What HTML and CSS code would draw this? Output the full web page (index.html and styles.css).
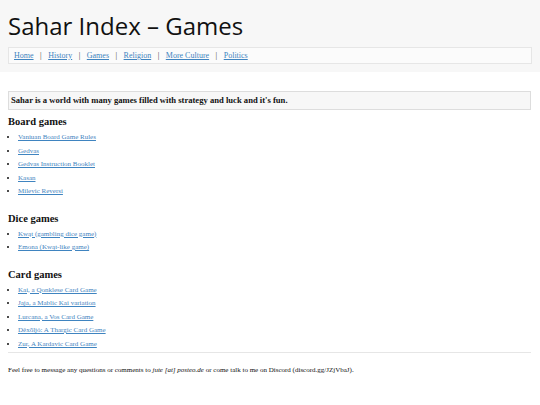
FILE: index.html
```html
<!DOCTYPE html>
<html>
<head>
<meta charset="utf-8">
<title>Sahar Index – Games</title>
<link rel="stylesheet" href="styles.css">
</head>
<body>
<header class="site-header">
  <h1 class="site-title">Sahar Index – Games</h1>
  <nav class="nav">
    <a href="#">Home</a><span class="sep">|</span><a href="#">History</a><span class="sep">|</span><a href="#">Games</a><span class="sep">|</span><a href="#">Religion</a><span class="sep">|</span><a href="#">More Culture</a><span class="sep">|</span><a href="#">Politics</a>
  </nav>
</header>
<main class="content">
  <div class="intro">Sahar is a world with many games filled with strategy and luck and it's fun.</div>
  <h2 class="section">Board games</h2>
  <ul class="games">
    <li><a href="#">Vaniuan Board Game Rules</a></li>
    <li><a href="#">Gedvas</a></li>
    <li><a href="#">Gedvas Instruction Booklet</a></li>
    <li><a href="#">Kasan</a></li>
    <li><a href="#">Milevic Reversi</a></li>
  </ul>
  <h2 class="section">Dice games</h2>
  <ul class="games">
    <li><a href="#">Kwąt (gambling dice game)</a></li>
    <li><a href="#">Emona (Kwąt-like game)</a></li>
  </ul>
  <h2 class="section">Card games</h2>
  <ul class="games last">
    <li><a href="#">Kai, a Qonklese Card Game</a></li>
    <li><a href="#">Jaja, a Mablic Kai variation</a></li>
    <li><a href="#">Lurcana, a Vos Card Game</a></li>
    <li><a href="#">Děxōljó: A Thargic Card Game</a></li>
    <li><a href="#">Zur, A Kardavic Card Game</a></li>
  </ul>
  <hr class="rule">
  <p class="footer">Feel free to message any questions or comments to <em>jute [at] posteo.de</em> or come talk to me on Discord (discord.gg/JZjVbaJ).</p>
</main>
</body>
</html>
```
FILE: styles.css
```css
html, body {
  margin: 0;
  padding: 0;
  background: #ffffff;
  color: #111111;
  font-family: "Liberation Serif", "Times New Roman", serif;
}
.site-header {
  background: #f7f7f7;
  padding: 9px 8px 8px 8px;
}
.site-title {
  margin: 0 0 4px 0;
  font-family: "Open Sans", sans-serif;
  font-weight: 400;
  font-size: 24px;
  line-height: 34px;
  color: #111111;
}
.nav {
  background: #fbfbfb;
  border: 1px solid #e6e6e6;
  padding: 1px 5px;
  font-size: 8px;
  line-height: 13px;
  color: #333333;
}
.nav a {
  color: #3f84c0;
}
.sep {
  margin: 0 6.5px;
}
.content {
  padding: 19px 9px 0 8px;
}
.intro {
  background: #f7f7f7;
  border: 1px solid #dddddd;
  padding: 3px 2px;
  font-weight: bold;
  font-size: 8.6px;
  line-height: 11px;
}
.section {
  margin: 6px 0 3px 0;
  font-size: 10.5px;
  line-height: 12px;
  font-weight: bold;
}
.games {
  margin: 0 0 14px 0;
  padding-left: 10px;
  font-size: 7px;
  line-height: 13.5px;
}
.games.last {
  margin-bottom: 1px;
}
.games a {
  color: #3f84c0;
}
.rule {
  border: 0;
  border-top: 1px solid #e6e6e6;
  margin: 0;
}
.footer {
  font-size: 7px;
  line-height: 8px;
  margin: 13px 0;
}
```
